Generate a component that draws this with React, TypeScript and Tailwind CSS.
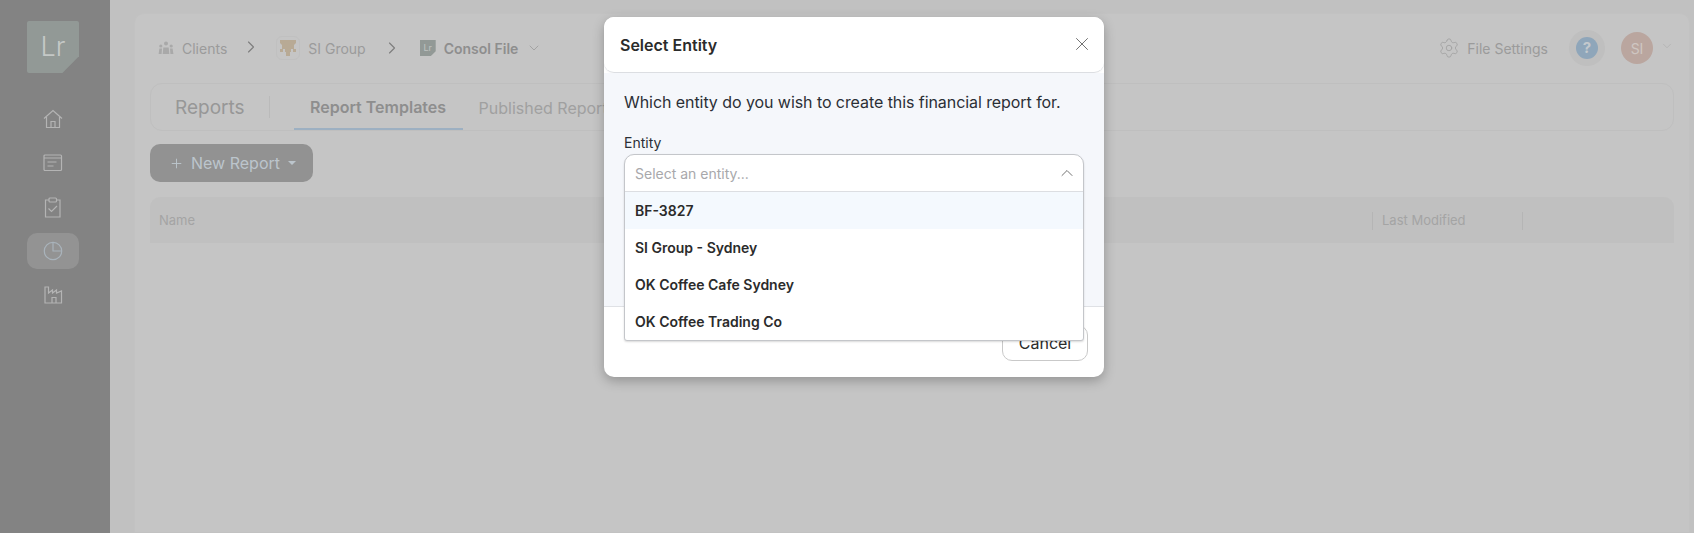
import { ChevronDown, ChevronRight, ChevronUp, Plus, Settings, X } from 'lucide-react'

const entities = ['BF-3827', 'SI Group - Sydney', 'OK Coffee Cafe Sydney', 'OK Coffee Trading Co']

function HomeIcon() {
  return (
    <svg width="20" height="20" viewBox="0 0 20 20" fill="none" stroke="currentColor" strokeWidth="1.2">
      <path d="M1 9.500 10 1.500l9 8M3.500 8v10.500h13V8" />
      <path d="M8 18.500v-6h4v6" />
    </svg>
  )
}

function ArticleIcon() {
  return (
    <svg width="20" height="18" viewBox="0 0 20 18" fill="none" stroke="currentColor" strokeWidth="1.2">
      <rect x="1" y="1" width="17.5" height="15.5" rx="1" />
      <path d="M1 4h17.500M4.500 8h9M4.500 12h6" />
    </svg>
  )
}

function ClipboardIcon() {
  return (
    <svg width="18" height="21" viewBox="0 0 18 21" fill="none" stroke="currentColor" strokeWidth="1.2">
      <path d="M5 3H1.500v17h14.500V3h-3.500" />
      <rect x="5" y="1" width="7.5" height="4" rx="1" />
      <path d="m4.500 11.500 3 3 5.500-5.500" />
    </svg>
  )
}

function PieIcon() {
  return (
    <svg width="20" height="20" viewBox="0 0 20 20" fill="none" stroke="currentColor" strokeWidth="1.2">
      <circle cx="10" cy="10" r="8.7" />
      <path d="M10 1.300V10h8.700" />
    </svg>
  )
}

function FactoryIcon() {
  return (
    <svg width="19" height="18" viewBox="0 0 19 18" fill="none" stroke="currentColor" strokeWidth="1.2">
      <path d="M1 17V1h3.500v6l4-3v3l4-3v3l5-2v12z" />
      <path d="M8 17v-5.500h4V17" />
    </svg>
  )
}

function ClientsIcon() {
  return (
    <svg width="16" height="14" viewBox="0 0 16 14" fill="#a9a9a9">
      <circle cx="8" cy="2.500" r="2" />
      <circle cx="2.800" cy="5" r="1.600" />
      <circle cx="13.200" cy="5" r="1.600" />
      <path d="M5.300 6.500h5.400l.6 6.500H4.700z" />
      <path d="M1.400 7.500h2.600L3.600 13H.6zM12 7.500h2.600l.8 5.500h-3z" />
    </svg>
  )
}

function SiLogo() {
  return (
    <svg width="16" height="16" viewBox="0 0 16 16" fill="#b8aa95">
      <path d="M0 0h16v3l-2 2v4H2V5L0 3z" />
      <rect x="0" y="9" width="3" height="3" />
      <rect x="13" y="9" width="3" height="3" />
      <rect x="5" y="9" width="6" height="3" />
      <rect x="6" y="12" width="4" height="4" />
    </svg>
  )
}

export default function App() {
  return (
    <div className="relative flex h-[533px] w-[1694px] overflow-hidden bg-[#c1c1c1] font-['Inter',sans-serif]">
      <aside className="flex w-[110px] shrink-0 flex-col items-center bg-[#838383] pr-[4px] pt-[21px] text-[#b4b4b4]">
        <div className="flex h-[52px] w-[52px] items-center justify-center rounded-[2px] bg-[#929996] text-[27px] font-light text-[#c4c8c6] [clip-path:polygon(0_0,100%_0,100%_68%,68%_100%,0_100%)]">
          Lr
        </div>
        <nav className="mt-[24px] flex flex-col items-center">
          <div className="flex h-[44px] items-center justify-center"><HomeIcon /></div>
          <div className="flex h-[44px] items-center justify-center"><ArticleIcon /></div>
          <div className="flex h-[44px] items-center justify-center"><ClipboardIcon /></div>
          <div className="my-[4px] flex h-[36px] w-[52px] items-center justify-center rounded-[10px] bg-[#939393] text-[#a9b3bb]"><PieIcon /></div>
          <div className="flex h-[44px] items-center justify-center"><FactoryIcon /></div>
        </nav>
      </aside>

      <main className="mt-[13px] ml-[24px] mr-[4px] flex-1 rounded-t-[10px] border border-[#c2c2c2] bg-[#c5c5c5] px-[15px] pt-[16px]">
        <header className="flex h-[36px] items-center text-[14px] text-[#9b9b9b]">
          <div className="ml-[8px] flex items-center gap-[8px]">
            <ClientsIcon />
            <span>Clients</span>
          </div>
          <ChevronRight size={20} strokeWidth={1.3} className="ml-[14px] mb-[3px] text-[#7d7d7d]" />
          <div className="ml-[15px] flex h-[24px] w-[24px] items-center justify-center rounded-[6px] border border-[#c0c0c0]"><SiLogo /></div>
          <span className="ml-[8px]">SI Group</span>
          <ChevronRight size={20} strokeWidth={1.3} className="ml-[16px] text-[#7d7d7d]" />
          <div className="ml-[18px] flex h-[16px] w-[16px] items-center justify-center bg-[#929996] text-[9px] text-[#bfc3c1] [clip-path:polygon(0_0,100%_0,100%_70%,70%_100%,0_100%)]">Lr</div>
          <span className="ml-[8px] font-semibold text-[#8e8e8e]">Consol File</span>
          <ChevronDown size={16} strokeWidth={1.2} className="ml-[8px] text-[#9a9a9a]" />
          <div className="ml-auto flex items-center">
            <Settings size={22} strokeWidth={1} className="text-[#a3a3a3]" />
            <span className="ml-[7px] text-[#9b9b9b]">File Settings</span>
            <div className="ml-[21px] flex h-[36px] w-[36px] items-center justify-center rounded-full bg-[#bfbfbf]">
              <div className="flex h-[22px] w-[22px] items-center justify-center rounded-full bg-[#8fa6ba] text-[15px] font-bold text-[#c4c9cd]">?</div>
            </div>
            <div className="ml-[16px] flex h-[32px] w-[32px] items-center justify-center rounded-full bg-[#baa69f] text-[14px] text-[#cfc6c2]">SI</div>
            <ChevronDown size={14} strokeWidth={1} className="mb-[4px] ml-[7px] text-[#a9a9a9]" />
          </div>
        </header>

        <section className="mt-[17px] flex h-[48px] items-stretch rounded-[12px] border border-[#bfbfbf]">
          <div className="flex items-center pl-[24px] pt-[2px] text-[19px] text-[#979797]">Reports</div>
          <div className="my-[12px] ml-[24px] w-px bg-[#bababa]" />
          <div className="ml-[24px] flex w-[169px] items-center justify-center border-b-2 border-[#9db0c2] pt-[1px] text-[16px] font-semibold text-[#8e8e8e]">Report Templates</div>
          <div className="ml-[16px] flex items-center pt-[1px] text-[16px] text-[#a0a0a0]">Published Reports</div>
        </section>

        <button className="mt-[13px] flex h-[38px] w-[163px] items-center rounded-[10px] bg-[#929292] pl-[19px] text-[16px] text-[#bcc5cc]">
          <Plus size={15} strokeWidth={1.5} />
          <span className="ml-[7px]">New Report</span>
          <span className="ml-[8px] h-0 w-0 border-x-[4px] border-t-[4px] border-x-transparent border-t-[#bcc5cc]" />
        </button>

        <div className="mt-[15px] flex h-[46px] items-center rounded-t-[10px] bg-[#c0c0c0] pt-[2px] text-[13px] text-[#a4a4a4]">
          <span className="ml-[9px]">Name</span>
          <div className="ml-auto flex h-[18px] items-center">
            <div className="h-full w-px bg-[#b5b5b5]" />
            <span className="ml-[9px] w-[140px]">Last Modified</span>
            <div className="h-full w-px bg-[#b5b5b5]" />
            <div className="w-[151px]" />
          </div>
        </div>
      </main>

      {/* dialog */}
      <div className="absolute left-[604px] top-[17px] flex h-[360px] w-[500px] flex-col rounded-[10px] bg-white shadow-[0_4px_12px_rgba(0,0,0,0.25)]">
        <div className="flex h-[56px] shrink-0 items-center justify-between rounded-[10px] border-b border-[#dcdee2] bg-white pl-[16px] pr-[11px] shadow-[0_1px_2px_rgba(0,0,0,0.04)]">
          <h2 className="text-[16px] font-semibold text-[#2b2b2b]">Select Entity</h2>
          <X size={22} strokeWidth={1} className="mb-[1px] text-[#666]" />
        </div>
        <div className="relative h-[234px] shrink-0 border-b border-[#dfe1e5] bg-[#f5f7fb] px-[20px] pt-[19px]">
          <p className="text-[16px] leading-[20px] tracking-[-0.07px] text-[#2b2f36]">Which entity do you wish to create this financial report for.</p>
          <label className="mt-[22px] block text-[14px] leading-[17px] text-[#2b2f36]">Entity</label>
          <div className="absolute left-[20px] top-[81px] z-10 w-[460px] rounded-[10px] rounded-b-[3px] border border-[#c4c6ca] bg-white shadow-[0_1px_2px_rgba(0,0,0,0.15)]">
            <div className="flex h-[37px] items-center justify-between border-b border-[#dcdee2] pl-[10px] pr-[6px] text-[14px] text-[#a8a8ab]">
              <span>Select an entity...</span>
              <ChevronUp size={20} strokeWidth={1.1} className="text-[#666]" />
            </div>
            {entities.map((name, i) => (
              <div
                key={name}
                className={`flex h-[37px] items-center pl-[10px] text-[14px] font-semibold text-[#2b2b2b] ${i === 0 ? 'bg-[#f4f9fe]' : ''}`}
              >
                {name}
              </div>
            ))}
          </div>
        </div>
        <div className="flex flex-1 justify-end pr-[16px] pt-[18px]">
          <button className="h-[36px] w-[86px] rounded-[10px] border border-[#c9c9c9] bg-white pb-[1px] text-[16px] text-[#2b2b2b]">Cancel</button>
        </div>
      </div>
    </div>
  )
}
